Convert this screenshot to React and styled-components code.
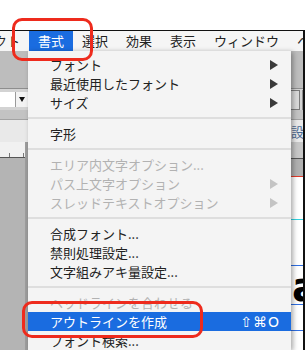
import styled, { createGlobalStyle } from 'styled-components';

const GlobalStyle = createGlobalStyle`
  html, body {
    margin: 0;
    padding: 0;
    background: #fff;
  }
  body {
    font-family: "Noto Sans CJK JP", "DejaVu Sans", sans-serif;
  }
`;

const Page = styled.div`
  position: relative;
  width: 305px;
  height: 350px;
  padding-top: 30px;
  box-sizing: border-box;
  overflow: hidden;
  background: #fff;
`;

const Screen = styled.div`
  position: relative;
  height: 320px;
  display: flex;
  flex-direction: column;
  border-top: 1px solid #111;
  border-right: 2px solid #111;
  overflow: hidden;
`;

const MenuBar = styled.div`
  flex: none;
  height: 20px;
  background: #f5f5f5;
  overflow: hidden;
`;

const MenuRow = styled.div`
  display: flex;
  margin-left: -67px;
  white-space: nowrap;
`;

const MenuTitle = styled.div`
  flex: none;
  height: 21px;
  padding: 0 9px;
  font-size: 13px;
  line-height: 20px;
  color: ${(p) => (p.$active ? '#fff' : '#222')};
  background: ${(p) => (p.$active ? '#1a6ce0' : 'transparent')};
`;

const Workspace = styled.div`
  flex: 1;
  display: flex;
  flex-direction: column;
  background: #b3b3b3;
`;

const Band = styled.div`
  flex: none;
  height: ${(p) => p.$h}px;
  display: flex;
  justify-content: space-between;
  align-items: ${(p) => p.$align || 'center'};
  background: ${(p) => p.$bg};
  border-bottom: ${(p) => (p.$line ? `1px solid ${p.$line}` : 'none')};
  overflow: hidden;
`;

const Group = styled.div`
  display: flex;
  align-items: center;
`;

const InputField = styled.div`
  width: 15px;
  height: 15px;
  background: #fff;
  border-right: 1px solid #9a9a9a;
`;

const DropBtn = styled.div`
  width: 12px;
  height: 15px;
  display: flex;
  align-items: center;
  justify-content: center;
  background: #f3f3f3;
  border-right: 1px solid #9a9a9a;

  &::after {
    content: '';
    border-top: 5px solid #111;
    border-left: 3.5px solid transparent;
    border-right: 3.5px solid transparent;
  }
`;

const OutlineBox = styled.div`
  width: 9px;
  height: 18px;
  margin-right: 2px;
  border: 1px solid #7c7c7c;
  background: #d9d9d9;
`;

const VLine = styled.div`
  width: 1px;
  height: 20px;
  background: #8c8c8c;
`;

const PanelLabel = styled.span`
  margin-right: -14px;
  font-size: 13px;
  color: #4c6b95;
`;

const Main = styled.div`
  flex: 1;
  display: grid;
  grid-template-columns: 28px 1fr 12px;
`;

const LeftPanel = styled.div`
  display: flex;
  flex-direction: column;
  background: #b4b4b4;
  border-right: 3px solid #9d9d9d;
`;

const Ruler = styled.div`
  height: 15px;
  display: flex;
  align-items: flex-end;
  gap: 13px;
  padding-left: 9px;
  background: #f1f1f1;
  border-bottom: 1px solid #555;
`;

const Tick = styled.span`
  width: 1px;
  height: 4px;
  background: #777;
`;

const Hidden = styled.div`
  background: #b4b4b4;
`;

const DocWindow = styled.div`
  display: flex;
  flex-direction: column;
`;

const DocHeader = styled.div`
  height: 16px;
  background: #c7c7c7;
  border-bottom: 1px solid #555;
`;

const DocTabs = styled.div`
  height: 17px;
  background: #b0b0b0;
  border-bottom: 1px solid #e23a2a;
`;

const Canvas = styled.div`
  position: relative;
  flex: 1;
  background: #fff;
  overflow: hidden;
`;

const Guide = styled.div`
  position: absolute;
  left: 0;
  right: 0;
  top: ${(p) => p.$y}px;
  height: 1px;
  background: ${(p) => p.$color};
`;

const BigGlyph = styled.span`
  position: absolute;
  left: 1px;
  top: ${(p) => p.$y}px;
  font-family: "DejaVu Sans", sans-serif;
  font-weight: 700;
  font-size: 40px;
  line-height: 1;
  color: #000;
`;

const Dropdown = styled.div`
  position: absolute;
  top: 20px;
  left: 28px;
  width: 263px;
  padding-top: 4px;
  background: #f4f4f4;
  box-shadow: 2px 1px 5px rgba(0, 0, 0, 0.35);
`;

const Item = styled.div`
  height: 19px;
  display: flex;
  align-items: center;
  justify-content: space-between;
  padding: 0 13px 0 22px;
  font-size: 13px;
  white-space: nowrap;
  color: ${(p) => (p.$active ? '#fff' : p.$disabled ? '#b2b2b2' : '#222')};
  background: ${(p) => (p.$active ? '#1a6ce0' : 'transparent')};
`;

const Arrow = styled.span`
  width: 0;
  height: 0;
  border-left: 8px solid ${(p) => (p.$disabled ? '#c4c4c4' : '#3a3a3a')};
  border-top: 5px solid transparent;
  border-bottom: 5px solid transparent;
`;

const Shortcut = styled.span`
  margin-right: -2px;
  font-family: "DejaVu Sans", sans-serif;
  font-size: 14px;
  letter-spacing: 1px;
`;

const Separator = styled.div`
  height: 12px;
  display: flex;
  align-items: center;

  &::after {
    content: '';
    flex: 1;
    height: 2px;
    background: #dedede;
  }
`;

const Callout = styled.div`
  position: absolute;
  left: ${(p) => p.$x}px;
  top: ${(p) => p.$y}px;
  width: ${(p) => p.$w}px;
  height: ${(p) => p.$h}px;
  box-sizing: border-box;
  border: 3px solid #ee2b1d;
  border-radius: 10px;
`;

const menuTitles = ['オブジェクト', '書式', '選択', '効果', '表示', 'ウィンドウ', 'ヘルプ'];

const menu = [
  { label: 'フォント', sub: true },
  { label: '最近使用したフォント', sub: true },
  { label: 'サイズ', sub: true },
  'sep',
  { label: '字形' },
  'sep',
  { label: 'エリア内文字オプション...', disabled: true },
  { label: 'パス上文字オプション', disabled: true, sub: true },
  { label: 'スレッドテキストオプション', disabled: true, sub: true },
  'sep',
  { label: '合成フォント...' },
  { label: '禁則処理設定...' },
  { label: '文字組みアキ量設定...' },
  'sep',
  { label: 'ヘッドラインを合わせる', disabled: true },
  { label: 'アウトラインを作成', active: true, shortcut: '⇧⌘O' },
  { label: 'フォント検索...' },
];

const App = () => {
  return (
    <>
      <GlobalStyle />
      <Page>
        <Screen>
          <MenuBar>
            <MenuRow>
              {menuTitles.map((t) => (
                <MenuTitle key={t} $active={t === '書式'}>
                  {t}
                </MenuTitle>
              ))}
            </MenuRow>
          </MenuBar>
          <Workspace>
            <Band $h={37} $bg="#bdbdbd" $line="#8e8e8e" />
            <Band $h={21} $bg="#d3d3d3">
              <Group>
                <InputField />
                <DropBtn />
              </Group>
              <Group>
                <OutlineBox />
                <VLine />
              </Group>
            </Band>
            <Band $h={9} $bg="#c3c3c3" $line="#a3a3a3" />
            <Band $h={22} $bg="#e9e9e9">
              <span />
              <PanelLabel>設定</PanelLabel>
            </Band>
            <Main>
              <LeftPanel>
                <Ruler>
                  <Tick />
                  <Tick />
                </Ruler>
              </LeftPanel>
              <Hidden />
              <DocWindow>
                <DocHeader />
                <DocTabs />
                <Canvas>
                  <Guide $y={42} $color="#33d3df" />
                  <Guide $y={88} $color="#2f6fe3" />
                  <BigGlyph $y={90}>a</BigGlyph>
                  <Guide $y={127} $color="#2f6fe3" />
                  <Guide $y={153} $color="#2f6fe3" />
                </Canvas>
              </DocWindow>
            </Main>
          </Workspace>
          <Dropdown>
            {menu.map((m, i) =>
              m === 'sep' ? (
                <Separator key={i} />
              ) : (
                <Item key={i} $disabled={m.disabled} $active={m.active}>
                  <span>{m.label}</span>
                  {m.sub && <Arrow $disabled={m.disabled} />}
                  {m.shortcut && <Shortcut>{m.shortcut}</Shortcut>}
                </Item>
              )
            )}
          </Dropdown>
        </Screen>
        <Callout $x={12} $y={18} $w={81} $h={43} />
        <Callout $x={22} $y={301} $w={181} $h={37} />
      </Page>
    </>
  );
};

export default App;
